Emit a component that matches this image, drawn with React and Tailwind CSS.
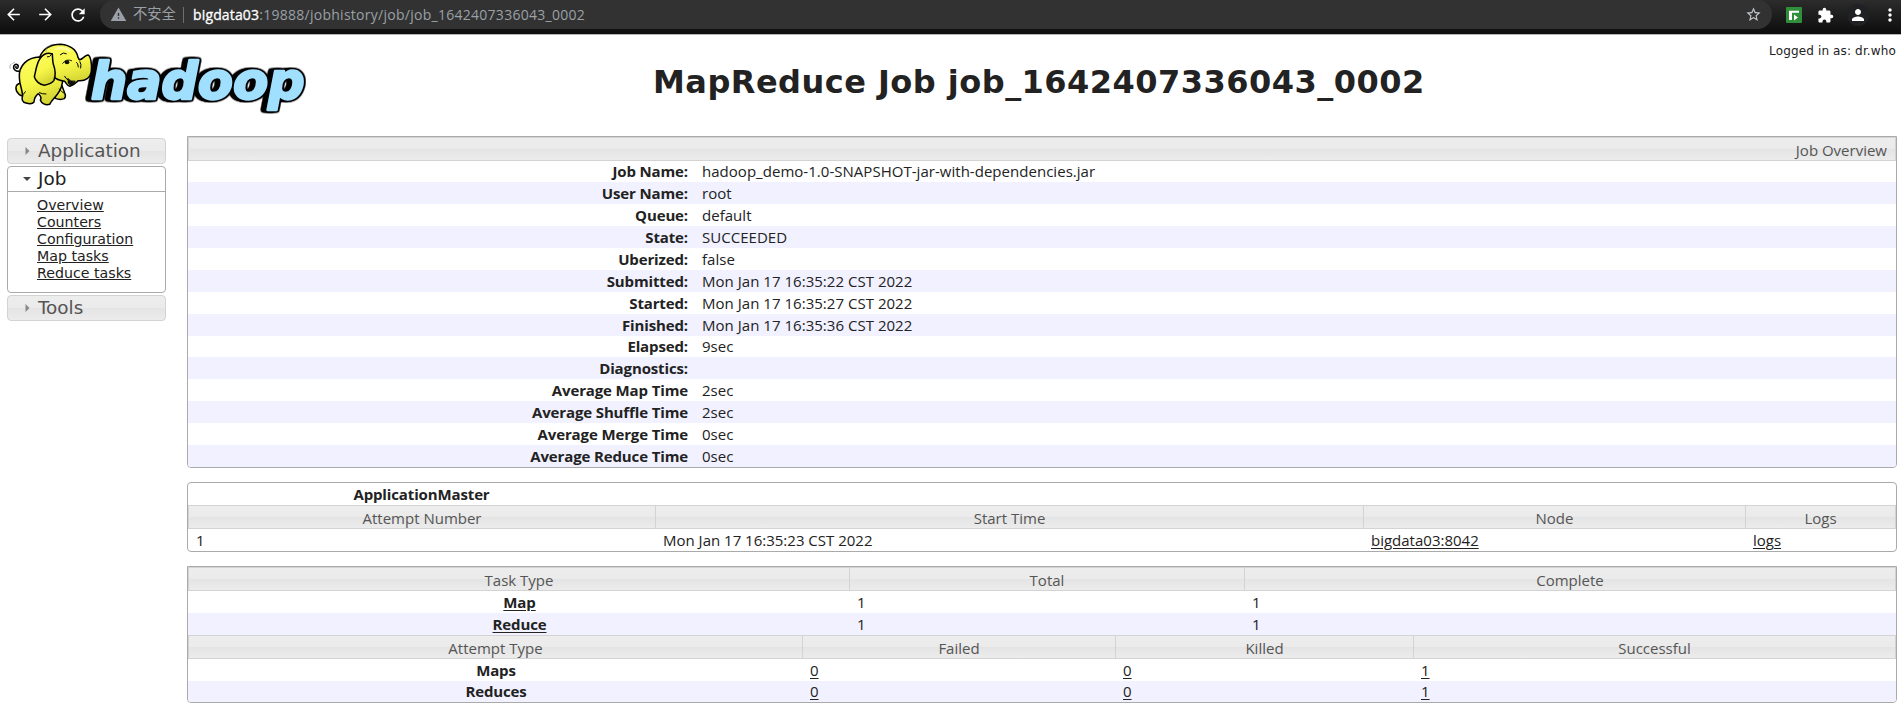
import React from "react";
import { MdArrowBack, MdArrowForward, MdRefresh, MdWarning, MdStarBorder, MdExtension, MdPerson, MdMoreVert } from "react-icons/md";

const overview = [
  ["Job Name:", "hadoop_demo-1.0-SNAPSHOT-jar-with-dependencies.jar"],
  ["User Name:", "root"],
  ["Queue:", "default"],
  ["State:", "SUCCEEDED"],
  ["Uberized:", "false"],
  ["Submitted:", "Mon Jan 17 16:35:22 CST 2022"],
  ["Started:", "Mon Jan 17 16:35:27 CST 2022"],
  ["Finished:", "Mon Jan 17 16:35:36 CST 2022"],
  ["Elapsed:", "9sec"],
  ["Diagnostics:", ""],
  ["Average Map Time", "2sec"],
  ["Average Shuffle Time", "2sec"],
  ["Average Merge Time", "0sec"],
  ["Average Reduce Time", "0sec"],
];

const AM_COLS = "grid grid-cols-[467px_708px_382px_1fr]";
const TASK_COLS = "grid grid-cols-[661px_395px_1fr]";
const ATTEMPT_COLS = "grid grid-cols-[614px_313px_298px_1fr]";

function BrowserBar() {
  return (
    <header className="flex h-[34px] w-full bg-gradient-to-b from-[#2c2c2c] to-[#0d0d0d] text-white">
      <div className="flex h-[29px] w-[100px] items-center gap-[13px] pl-[4px]">
        <MdArrowBack size={19} />
        <MdArrowForward size={19} />
        <MdRefresh size={20} />
      </div>
      <div className="flex h-[29px] w-[1672px] items-center rounded-full bg-[#323232] pr-[16px] pl-[10px] font-['Open_Sans','Noto_Sans_CJK_SC',sans-serif] text-[14px] leading-none text-[#9aa0a6]">
        <MdWarning size={17} />
        <span className="ml-[6px] w-[43px] text-[14.3px] whitespace-nowrap">不安全</span>
        <span className="ml-[7px] h-[16px] w-px bg-[#6b6e72]" />
        <span className="ml-[9px] tracking-[0.27px] whitespace-nowrap">
          <span className="tracking-[0.15px] text-white [-webkit-text-stroke:0.3px_white]">bigdata03</span>:19888/jobhistory/job/job_1642407336043_0002
        </span>
        <MdStarBorder size={17} className="ml-auto -mr-[6px] text-[#c4c7ca]" />
      </div>
      <div className="flex h-[30px] flex-1 items-center pl-[14px]">
        <svg width="16" height="16" viewBox="0 0 16 16">
          <rect width="16" height="16" rx="1" fill="#2f8f3a" />
          <path d="M3 13V3.8h10v2H6V13z" fill="#fff" />
          <path d="M8 7.5l4 3-4 3z" fill="#fff" />
        </svg>
        <MdExtension size={17} className="ml-[15px]" />
        <span className="ml-[13px] flex size-[22px] items-center justify-center rounded-full bg-[#202124]">
          <MdPerson size={18} />
        </span>
        <MdMoreVert size={20} className="ml-[11px] shrink-0" />
      </div>
    </header>
  );
}

function Logo() {
  return (
    <svg width="310" height="90" viewBox="0 0 930 270" role="img" aria-label="hadoop">
      <defs>
        <linearGradient id="hide" x1="0" y1="0" x2="0.35" y2="1">
          <stop offset="0" stopColor="#fcfc62" />
          <stop offset="0.6" stopColor="#f6f648" />
          <stop offset="1" stopColor="#d6d634" />
        </linearGradient>
      </defs>
      <text
        x="272"
        y="193"
        textLength="642"
        fontSize="154"
        fill="#a1dfff"
        stroke="#a1dfff"
        strokeWidth="7"
        strokeLinejoin="round"
        className="font-['DejaVu_Sans',sans-serif] font-bold italic [filter:drop-shadow(4px_0_0_#000)_drop-shadow(-4px_0_0_#000)_drop-shadow(0_4px_0_#000)_drop-shadow(0_-4px_0_#000)_drop-shadow(-12px_0_0_#000)]"
      >
        hadoop
      </text>
      <g stroke="#000" strokeWidth="4.5" strokeLinecap="round" strokeLinejoin="round" fill="url(#hide)">
        <path d="M62 108C46 112 38 101 42 92C47 84 57 89 54 97C51 103 46 99 48 94" fill="none" />
        <path d="M62 145C44 148 44 164 57 178C64 184 72 183 76 180Z" />
        <path d="M164 168L166 190Q180 196 193 191Q199 183 194 174L185 150Z" />
        <path d="M118 66C82 67 56 92 58 126C58 148 67 164 68 182C64 192 66 201 78 204Q96 209 102 201C103 190 108 181 115 176C121 182 127 187 121 195C124 205 136 212 149 208C156 192 176 181 184 156L188 140L150 70Z" />
        <path d="M120 64C132 38 154 28 182 28C210 31 229 43 234 67L238 74C249 73 255 60 264 60C273 63 276 91 274 108C272 128 256 139 235 137C228 143 222 151 210 154C199 151 199 143 194 139C179 137 167 132 160 124Z" />
        <path d="M157 57C140 50 125 60 118 74C108 92 107 112 103 125C106 138 119 149 133 151C147 148 157 143 162 136C168 119 165 101 160 88C157 76 158 67 157 57Z" />
        <path d="M204 137C202 147 210 152 220 149L226 138Q212 141 204 131Z" fill="#111" strokeWidth="2" />
        <path d="M156 57Q149 68 142 66M238 74Q244 75 246 73M230 82Q234 84 235 96M240 80Q245 88 242 99M181 59Q190 50 199 56M203 134Q197 131 194 124M76 170L70 178M118 173Q128 178 138 177M178 162Q184 171 191 174" fill="none" strokeWidth="3" />
        <ellipse cx="201" cy="82" rx="7" ry="6" fill="#111" stroke="none" />
        <path d="M188 85Q198 70 215 77" fill="none" strokeWidth="2.5" />
        <path d="M30 100Q27 92 33 87M38 86Q39 82 43 82M138 49Q135 39 144 33M147 34Q150 28 157 28" fill="none" stroke="#888" strokeWidth="2" />
      </g>
      <path d="M168 42Q190 34 209 47" stroke="#ffffc0" strokeWidth="7" strokeLinecap="round" fill="none" opacity=".7" />
    </svg>
  );
}

const BAR = "bg-[linear-gradient(#ededed_0%,#ebebeb_48%,#e4e4e4_52%,#ececec_100%)]";

function MenuHeading({ children }) {
  return (
    <h3 className={`flex h-[26px] items-center rounded-[4px] border border-[#d3d3d3] ${BAR} pl-[17px] text-[18.4px] leading-none text-[#555]`}>
      <svg width="5" height="8" viewBox="0 0 5 8" className="mr-[8px]">
        <path d="M0.5 0L4.5 4L0.5 8z" fill="#888" />
      </svg>
      {children}
    </h3>
  );
}

function Sidebar() {
  const links = ["Overview", "Counters", "Configuration", "Map tasks", "Reduce tasks"];
  return (
    <nav className="flex w-[159px] flex-col gap-[2px] font-['DejaVu_Sans',sans-serif]">
      <MenuHeading>Application</MenuHeading>
      <div className="h-[127px] rounded-[4px] border border-[#aaa]">
        <h3 className="flex h-[25px] items-center border-b border-[#aaa] pl-[15px] text-[18.4px] leading-none text-[#212121]">
          <svg width="8" height="4" viewBox="0 0 8 4" className="mr-[7px]">
            <path d="M0 0H8L4 4z" fill="#444" />
          </svg>
          Job
        </h3>
        <ul className="pt-[5px] pl-[29px] text-[14.2px] leading-[17px] text-[#222]">
          {links.map((l) => (
            <li key={l}><a className="whitespace-nowrap underline underline-offset-1">{l}</a></li>
          ))}
        </ul>
      </div>
      <MenuHeading>Tools</MenuHeading>
    </nav>
  );
}

function HeadRow({ cols, labels }) {
  return (
    <div className={`${cols} h-[24px] border-y border-l border-[#d3d3d3] ${BAR} text-[#555]`}>
      {labels.map((l) => (
        <div key={l} className="border-r border-[#d3d3d3] pt-px text-center leading-[22px]">{l}</div>
      ))}
    </div>
  );
}

const Link = ({ children }) => <a className="underline underline-offset-[1.5px]">{children}</a>;

const FRAME = "overflow-hidden border border-[#aaa]";
const BOLD = "font-bold tracking-[-0.13px]";

function JobOverview() {
  return (
    <section className={`${FRAME} h-[332px] rounded-b-[4px]`}>
      <div className={`h-[24px] border border-[#d3d3d3] ${BAR} pt-px pr-[8px] text-right leading-[22px] text-[#555]`}>Job Overview</div>
      {overview.map(([k, v], i) => (
        <div
          key={k}
          className={`grid grid-cols-[500px_1fr] gap-x-[14px] ${i === 0 || i === 8 ? "h-[21px] leading-[20px]" : "h-[22px] leading-[22px]"} ${i % 2 ? "bg-[#f1f1ff]" : "bg-white"}`}
        >
          <span className={`${BOLD} text-right`}>{k}</span>
          <span className="tracking-[0.03px]">{v}</span>
        </div>
      ))}
    </section>
  );
}

function ApplicationMaster() {
  return (
    <section className={`${FRAME} h-[70px] rounded-[4px]`}>
      <div className={`${AM_COLS} h-[22px] leading-[23px]`}><span className={`${BOLD} text-center`}>ApplicationMaster</span></div>
      <HeadRow cols={AM_COLS} labels={["Attempt Number", "Start Time", "Node", "Logs"]} />
      <div className={`${AM_COLS} pl-px leading-[23px] *:pl-[7px]`}>
        <span>1</span>
        <span>Mon Jan 17 16:35:23 CST 2022</span>
        <span><Link>bigdata03:8042</Link></span>
        <span><Link>logs</Link></span>
      </div>
    </section>
  );
}

function Tasks() {
  return (
    <section className={`${FRAME} h-[137px] rounded-b-[4px]`}>
      <HeadRow cols={TASK_COLS} labels={["Task Type", "Total", "Complete"]} />
      {["Map", "Reduce"].map((n, i) => (
        <div key={n} className={`${TASK_COLS} h-[22px] pl-px leading-[23px] ${i ? "bg-[#f1f1ff]" : ""}`}>
          <span className={`${BOLD} text-center`}><Link>{n}</Link></span>
          <span className="pl-[7px]">1</span>
          <span className="pl-[7px]">1</span>
        </div>
      ))}
      <HeadRow cols={ATTEMPT_COLS} labels={["Attempt Type", "Failed", "Killed", "Successful"]} />
      {["Maps", "Reduces"].map((n, i) => (
        <div key={n} className={`${ATTEMPT_COLS} h-[22px] pl-px ${i ? "bg-[#f1f1ff] leading-[21px]" : "leading-[23px]"}`}>
          <span className={`${BOLD} text-center`}>{n}</span>
          <span className="pl-[7px]"><Link>0</Link></span>
          <span className="pl-[7px]"><Link>0</Link></span>
          <span className="pl-[7px]"><Link>1</Link></span>
        </div>
      ))}
    </section>
  );
}

export default function App() {
  return (
    <div className="h-[728px] w-[1901px] overflow-hidden bg-white text-[#222]">
      <BrowserBar />
      <div className="flex h-[102px] border-t border-[#b5b5b5] font-['DejaVu_Sans',sans-serif]">
        <div className="w-[653px]"><Logo /></div>
        <h1 className="pt-[27px] text-[32px] leading-[40px] font-bold tracking-[0.48px] whitespace-nowrap">MapReduce Job job_1642407336043_0002</h1>
        <p className="ml-auto pt-[7px] pr-[5px] text-[12px] leading-[18px] tracking-[0.14px]">Logged in as: dr.who</p>
      </div>
      <div className="flex gap-[21px] pl-[7px]">
        <div className="pt-[2px]"><Sidebar /></div>
        <main className="flex w-[1710px] flex-col gap-[14px] font-['Open_Sans',sans-serif] text-[15px]">
          <JobOverview />
          <ApplicationMaster />
          <Tasks />
        </main>
      </div>
    </div>
  );
}
